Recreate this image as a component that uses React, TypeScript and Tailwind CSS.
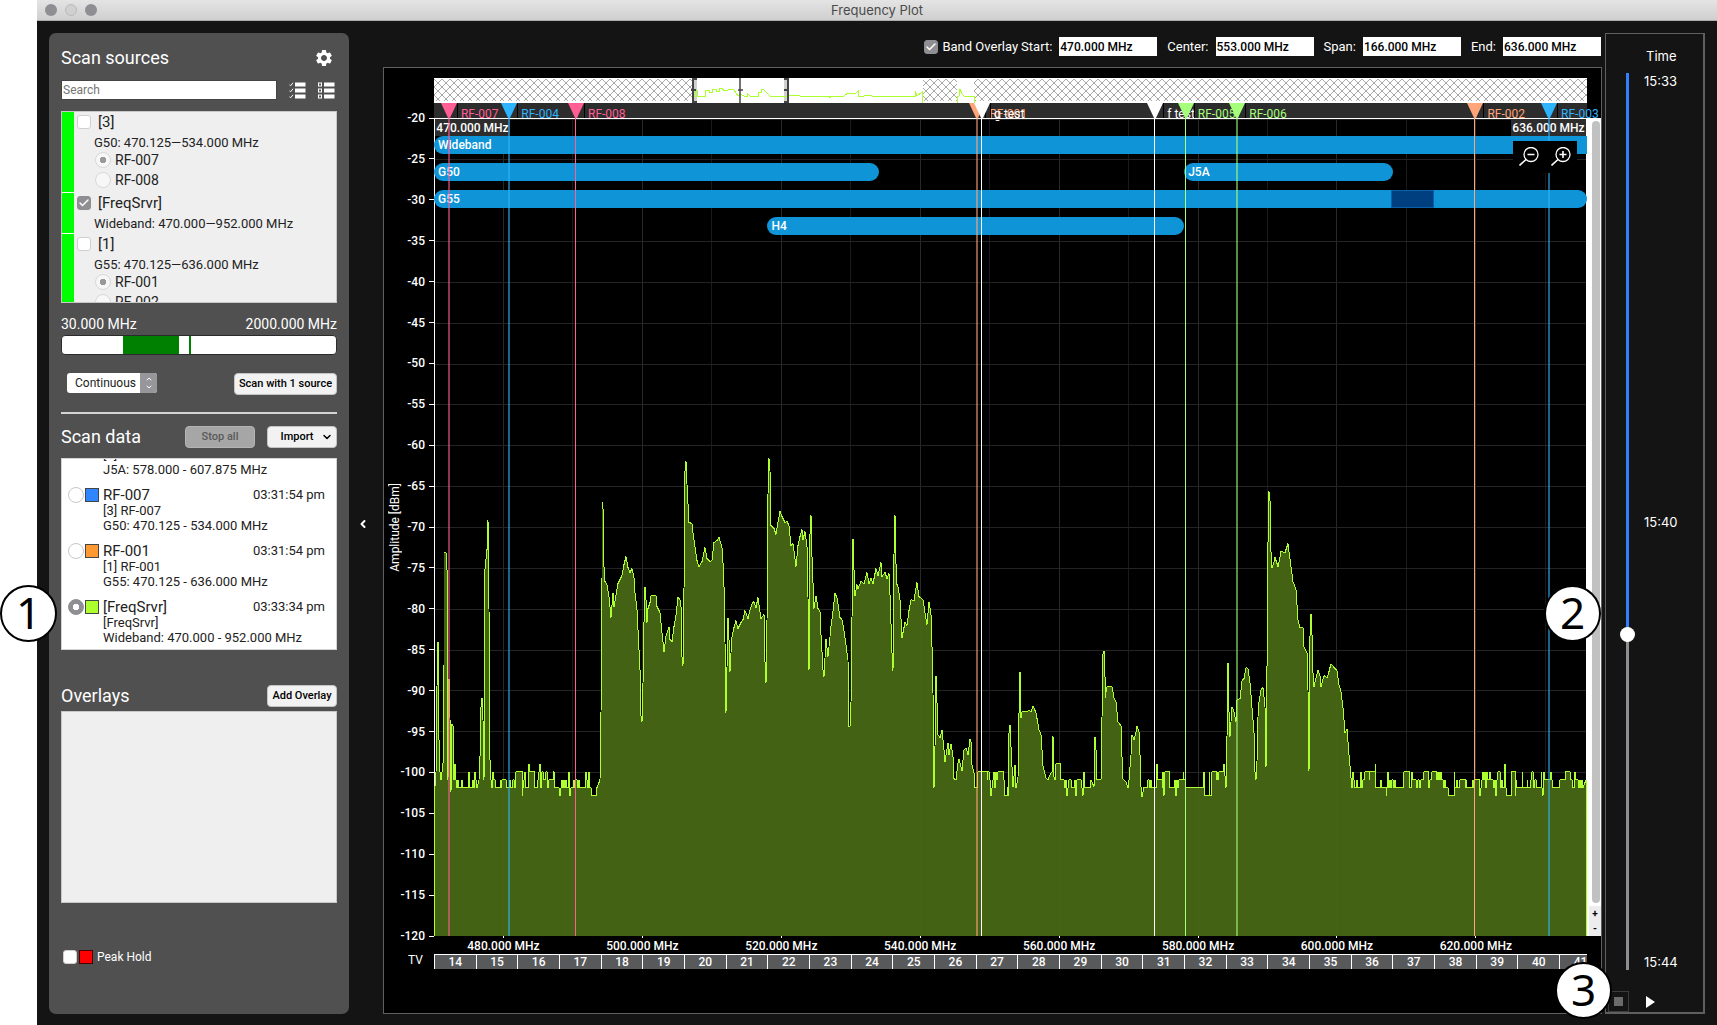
import { useState } from "react";
import type { ReactNode } from "react";
import { Check, ChevronDown, ChevronLeft, ChevronUp } from "lucide-react";
import { MdSettings } from "react-icons/md";

const START = 470;
const SPAN = 166;

const pct = (mhz: number) => `${((mhz - START) / SPAN) * 100}%`;

const SOURCES = [
  { name: "[3]", band: "G50: 470.125—534.000 MHz", radios: ["RF-007", "RF-008"], on: false },
  { name: "[FreqSrvr]", band: "Wideband: 470.000—952.000 MHz", radios: [], on: true },
  { name: "[1]", band: "G55: 470.125—636.000 MHz", radios: ["RF-001", "RF-002"], on: false },
];

const SCANS = [
  { name: "RF-005", source: "[2] RF-005", band: "J5A: 578.000 - 607.875 MHz", time: "03:31:54 pm", swatch: "bg-[#ff5c93]" },
  { name: "RF-007", source: "[3] RF-007", band: "G50: 470.125 - 534.000 MHz", time: "03:31:54 pm", swatch: "bg-[#2f86ff]" },
  { name: "RF-001", source: "[1] RF-001", band: "G55: 470.125 - 636.000 MHz", time: "03:31:54 pm", swatch: "bg-[#ff9a33]" },
  { name: "[FreqSrvr]", source: "[FreqSrvr]", band: "Wideband: 470.000 - 952.000 MHz", time: "03:33:34 pm", swatch: "bg-[#adff2f]" },
];

const RANGES = [
  { label: "Start:", value: "470.000 MHz" },
  { label: "Center:", value: "553.000 MHz" },
  { label: "Span:", value: "166.000 MHz" },
  { label: "End:", value: "636.000 MHz" },
];

const BANDS = [
  { label: "Wideband", from: 470, to: 636, style: "top-[18px] rounded-l-full" },
  { label: "G50", from: 470, to: 534, style: "top-[45px] rounded-full" },
  { label: "J5A", from: 578, to: 608, style: "top-[45px] rounded-full" },
  { label: "G55", from: 470, to: 636, style: "top-[72px] rounded-full" },
  { label: "H4", from: 518, to: 578, style: "top-[99px] rounded-full" },
];

const PINK = { fill: "fill-[#ff5f95]", text: "text-[#ff5f95]", line: "bg-[#ff5f95]" };
const BLUE = { fill: "fill-[#2fb4ff]", text: "text-[#2fb4ff]", line: "bg-[#2fb4ff]" };
const ORANGE = { fill: "fill-[#ffa57a]", text: "text-[#ffa57a]", line: "bg-[#ffa57a]" };
const GREEN = { fill: "fill-[#a5ff7a]", text: "text-[#a5ff7a]", line: "bg-[#a5ff7a]" };
const WHITE = { fill: "fill-white", text: "text-white", line: "bg-white" };

const MARKERS = [
  { label: "RF-007", mhz: 472, color: PINK, wide: true },
  { label: "RF-004", mhz: 480.7, color: BLUE, wide: true },
  { label: "RF-008", mhz: 490.3, color: PINK, wide: false },
  { label: "RF-001", mhz: 548.1, color: ORANGE, wide: true },
  { label: "g test", mhz: 548.8, color: WHITE, wide: false },
  { label: "f test", mhz: 573.7, color: WHITE, wide: false },
  { label: "RF-005", mhz: 578.1, color: GREEN, wide: false },
  { label: "RF-006", mhz: 585.5, color: GREEN, wide: true },
  { label: "RF-002", mhz: 619.8, color: ORANGE, wide: false },
  { label: "RF-003", mhz: 630.4, color: BLUE, wide: true },
];

const LEVELS = Array.from({ length: 21 }, (_, i) => -20 - i * 5);
const FREQ_TICKS = [480, 500, 520, 540, 560, 580, 600, 620];
const FREQ_GRID = Array.from({ length: 16 }, (_, i) => 480 + i * 10);
const CHANNELS = Array.from({ length: 28 }, (_, i) => 14 + i);

// Repeatable noise floor between -99 and -103 dBm
let seed = 7;
function rand() {
  seed = (seed * 16807) % 2147483647;
  return seed / 2147483647;
}

function noise(from: number, to: number) {
  const out: string[] = [];
  let x = from;
  while (x < to) {
    const r = rand();
    const y = r < 0.02 ? 645 : r < 0.22 ? 653 : r < 0.62 ? 661 : r < 0.94 ? 669 : 677;
    out.push(`${x},${y}`);
    x += 1;
    if (rand() < 0.12) {
      x += 3;
      out.push(`${x},${y}`);
    }
  }
  return out.join(" ");
}

const TRACE = [
  "0,668 1,668 2,654 3,568 4,523 4,544 5,621 6,653 7,661 9,646 10,546 10,434 12,434 13,451 13,466 14,661 15,560 16,599 17,673 18,605 19,607 20,661",
  noise(21, 44),
  "45,661 46,638 47,588 48,579 49,601 50,661 51,451 53,431 53,402 54,402 55,490 56,641 57,661",
  noise(58, 164),
  "166,661 167,594 168,459 168,384 169,390 170,448 171,463 173,466 175,478 177,499 179,474 180,488 183,471 184,465 188,457 190,446 192,438 194,449 196,454 198,450 200,459 201,474 203,491 204,511 206,551 207,597 208,603 209,564 210,504 211,468 212,481 213,504 214,490 216,484 217,477 222,477 223,488 226,494 228,514 230,533 232,517 235,508 236,521 238,523 240,508 242,497 244,479 246,481 247,488 248,538 249,547 250,471 251,353 252,343 253,366 255,404 258,405 259,414 261,428 263,442 265,448 268,443 271,429 273,440 276,443 278,442 280,424 283,422 285,419",
  "288,429 289,444 290,468 291,523 292,594 293,549 294,499 295,521 296,553 297,534 298,518 300,509 302,502 304,510 307,504 309,501 311,492 314,500 316,491 318,485 320,483 322,489 324,479 327,500 330,496 331,543 332,564 333,503 334,376 335,340 336,353 337,407 340,410 342,416 344,404 346,393 348,398 351,404 353,403 355,407 357,427 359,425 362,448 364,427 366,418 368,411 369,421 371,413 373,428 374,478 375,551 376,416 377,397 378,438 380,490 382,477 384,490 386,493 387,516 389,551 390,558 392,520 394,538 397,508 399,493 401,475 403,479 406,499 408,501 410,512 413,534 414,541 415,608 416,608 417,584 418,499 419,420 420,451 421,477 423,466 424,470 427,463 430,465 433,454 435,465 437,460 439,465 442,450 444,457 447,444 448,458 451,454 453,460 455,455 456,476 458,534 459,552 460,436 461,397 462,445 463,466 464,468 466,481 468,519 471,504 473,507 475,492 477,481 480,482 483,464 485,478 489,481 491,494 493,506 495,483 497,496 498,528 499,574 500,669 501,628 502,557 503,584 504,616 506,619 508,611 510,631 511,643 514,624 515,636 517,625 519,638 520,660 522,661 524,644 525,640 528,652 530,631 532,629 534,636 536,620 537,623 538,646 540,654 541,669 543,669",
  noise(544, 572),
  "573,668 574,677 575,614 576,606 577,628 579,668 581,646 582,669 584,659 585,595 586,553 586,564 587,599 588,593 593,593 595,591 597,593 599,587 602,594 605,611 607,616 608,631 609,647 612,659 614,661 616,656 618,653 618,618 619,618 620,658",
  noise(621, 658),
  "660,668 661,618 662,631 663,661 667,661 668,598 669,535 670,532 671,558 671,579 673,568 678,568 680,579 682,583 684,603 687,607 688,638 689,660 692,663 694,669 695,661 697,636 698,616 700,621 702,613 703,607 705,613 706,636 707,668 708,678 710,668",
  noise(711, 788),
  "790,645 792,669 793,618 794,544 795,593 796,618 798,588 800,593 802,603 803,581 806,580 808,562 810,560 812,549 814,550 816,564 818,589 820,614 821,653 822,661 823,643 824,598 825,583 827,571 829,569 831,588 832,648 833,548 834,424 835,373 836,382 837,433 838,449 840,444 841,439 844,448 845,444 847,433 851,434 854,425 855,433 857,448 859,463 862,471 864,501 866,509 869,509 870,528 873,534 874,571 875,652 876,518 877,495 878,516 879,554 880,568 882,559 884,551 886,557 887,568 890,557 893,559 895,553 897,545 901,550 903,552 905,566 907,573 909,589 911,614 913,610 915,636 917,659 918,669",
  noise(919, 1150),
  "1152,661",
].join(" ");

function Tick({ label, checked = false }: { label: string; checked?: boolean }) {
  const [on, setOn] = useState(checked);
  return (
    <span className="grid w-3.5 h-3.5 shrink-0">
      <input
        type="checkbox"
        aria-label={label}
        checked={on}
        onChange={() => setOn(!on)}
        className="col-start-1 row-start-1 appearance-none w-3.5 h-3.5 rounded-[3px] border border-[#cfcfcf] bg-white checked:bg-[#8e8e93] checked:border-[#8e8e93]"
      />
      {on && <Check className="col-start-1 row-start-1 m-px w-3 h-3 text-white pointer-events-none" strokeWidth={3} />}
    </span>
  );
}

function PanelButton({ children, disabled = false, className = "" }: { children: ReactNode; disabled?: boolean; className?: string }) {
  return (
    <button
      disabled={disabled}
      className={`h-[22px] rounded border text-[11px] font-medium whitespace-nowrap flex items-center justify-center ${
        disabled ? "bg-[#a6a6a6] border-[#b4b4b4] text-[#5a5a5a]" : "bg-[#f2f2f2] border-[#c4c4c4] text-black"
      } ${className}`}
    >
      {children}
    </button>
  );
}

function ListIcon({ checked }: { checked: boolean }) {
  return (
    <svg viewBox="0 0 17 17" className="w-[17px] h-[17px]">
      {[0, 6, 12].map((y) => (
        <g key={y}>
          <rect x="6" y={y + 0.5} width="10.5" height="4" fill="white" />
          {checked ? (
            <path d={`M0.4 ${y + 2.6} L1.6 ${y + 3.8} L4 ${y + 0.8}`} stroke="white" fill="none" />
          ) : (
            <rect x="0.5" y={y + 1} width="3" height="3" stroke="white" fill="none" />
          )}
        </g>
      ))}
    </svg>
  );
}

function Sidebar() {
  const [selected, setSelected] = useState("[FreqSrvr]");
  return (
    <aside className="w-[300px] shrink-0 rounded-[7px] bg-[#505050] px-3 pt-3 text-white">
      <div className="flex items-center justify-between h-[26px] pr-[3px]">
        <h2 className="text-lg">Scan sources</h2>
        <button aria-label="Settings">
          <MdSettings className="w-5 h-5" />
        </button>
      </div>

      <div className="flex items-center mt-[9px] h-5">
        <input
          aria-label="Search"
          placeholder="Search"
          className="w-[216px] h-5 bg-white border border-[#444] px-px text-xs text-black placeholder:text-[#757575] mr-3"
        />
        <button aria-label="Check all" className="mr-3">
          <ListIcon checked />
        </button>
        <button aria-label="Uncheck all">
          <ListIcon checked={false} />
        </button>
      </div>

      {/* Sources */}
      <div className="mt-[11px] h-48 overflow-hidden bg-[#efefef] border border-[#c8c8c8] text-[#222]">
        {SOURCES.map((s) => (
          <div key={s.name} className="flex">
            <div className="w-3 bg-[#00ff00] border-b border-white" />
            <div className="pl-[3px] pb-[3px]">
              <div className="flex items-center gap-[7px] h-5 text-[15px]">
                <Tick label={s.name} checked={s.on} />
                {s.name}
              </div>
              <div className="h-[18px] leading-[22px] pl-[17px] text-[13px]">{s.band}</div>
              {s.radios.map((r, i) => (
                <label key={r} className="flex items-center gap-1 h-5 pl-[18px] text-sm">
                  <input
                    type="radio"
                    name={s.name}
                    defaultChecked={i === 0}
                    className="appearance-none w-4 h-4 rounded-full border border-[#d8d8d8] bg-[#f7f7f7] checked:bg-[radial-gradient(circle,#999_0_3px,#f7f7f7_3px)]"
                  />
                  {r}
                </label>
              ))}
            </div>
          </div>
        ))}
      </div>

      <div className="flex justify-between mt-3 h-4 leading-[18px] text-sm">
        <span>30.000 MHz</span>
        <span>2000.000 MHz</span>
      </div>
      <div className="flex mt-1 h-5 rounded-sm border border-[#2b2b2b] bg-white">
        <div className="w-14 ml-[61px] bg-[#008000]" />
        <div className="w-0.5 ml-2.5 bg-[#008000]" />
      </div>

      <div className="flex justify-between mt-[18px] pl-1.5">
        <div className="grid w-[90px] h-5">
          <select aria-label="Scan mode" className="col-start-1 row-start-1 appearance-none rounded-[3px] bg-white text-[#222] text-xs leading-4 pl-2">
            <option>Continuous</option>
            <option>Single</option>
          </select>
          <span className="col-start-1 row-start-1 justify-self-end w-[17px] rounded-r-[3px] bg-[#97979b] flex flex-col items-center justify-center pointer-events-none">
            <ChevronUp className="w-2.5 h-2" strokeWidth={3} />
            <ChevronDown className="w-2.5 h-2" strokeWidth={3} />
          </span>
        </div>
        <PanelButton className="w-[103px]">Scan with 1 source</PanelButton>
      </div>

      <hr className="mt-[17px] border-0 h-0.5 bg-[#d4d4d4]" />

      <div className="flex items-center mt-3 h-[22px]">
        <h2 className="text-lg flex-1">Scan data</h2>
        <PanelButton disabled className="w-[70px] mr-3">Stop all</PanelButton>
        <PanelButton className="w-[70px] gap-2 pl-2.5">
          Import
          <ChevronDown className="w-3 h-3" strokeWidth={3} />
        </PanelButton>
      </div>

      {/* Recorded scans, scrolled to the end */}
      <div className="flex flex-col justify-end mt-2.5 h-48 overflow-hidden bg-white border border-[#d4d4d4] text-[#222]">
        {SCANS.map((s) => (
          <label key={s.source} className="flex shrink-0 h-14 pt-1.5 pl-1.5 pr-[11px]">
            <input
              type="radio"
              name="scan"
              checked={selected === s.name}
              onChange={() => setSelected(s.name)}
              className="appearance-none w-4 h-4 rounded-full border border-[#c8c8c8] bg-white checked:border-[#8e8e93] checked:bg-[radial-gradient(circle,#fff_0_3px,#8e8e93_3px)]"
            />
            <span className={`w-3.5 h-3.5 mt-px ml-px mr-1 border border-[#444] ${s.swatch}`} />
            <span className="flex-1 text-[13px]">
              <span className="flex justify-between text-[15px] leading-4">
                {s.name}
                <span className="text-[13px] leading-4">{s.time}</span>
              </span>
              <span className="block leading-[15px]">{s.source}</span>
              <span className="block leading-[15px]">{s.band}</span>
            </span>
          </label>
        ))}
      </div>

      <div className="flex items-center justify-between mt-[35px] h-[22px]">
        <h2 className="text-lg">Overlays</h2>
        <PanelButton className="w-[70px]">Add Overlay</PanelButton>
      </div>
      <div className="mt-1 h-48 bg-[#efefef] border border-[#c8c8c8]" />

      <div className="flex items-center mt-[44px] h-5 pl-0.5 text-xs leading-5">
        <Tick label="Peak Hold" />
        <span className="w-3.5 h-3.5 ml-0.5 mr-1 bg-[#ff0000] border border-[#4a0000]" />
        Peak Hold
      </div>
    </aside>
  );
}

function Toolbar() {
  return (
    <div className="flex justify-end gap-2.5 h-[34px] pt-1 pr-px text-[13px] text-white">
      <span className="flex items-center gap-1 h-[19px] -mr-[7px]">
        <Tick label="Band Overlay" checked />
        Band Overlay
      </span>
      {RANGES.map((r) => (
        <label key={r.label} className="flex items-center gap-[7px] h-[19px]">
          {r.label}
          <input defaultValue={r.value} className="w-[98px] h-[19px] bg-white px-px text-xs font-medium text-black" />
        </label>
      ))}
    </div>
  );
}

function Overview() {
  return (
    <svg viewBox="0 0 1153 25" preserveAspectRatio="none" className="flex-1 h-[25px] bg-white">
      <defs>
        <pattern id="hatch" width="8" height="8" patternUnits="userSpaceOnUse" patternTransform="translate(0 1)">
          <path d="M0 0 L8 8 M8 0 L0 8" stroke="#a8a8a8" shapeRendering="crispEdges" />
        </pattern>
      </defs>
      <rect x="0" y="1" width="258" height="22" fill="url(#hatch)" />
      <rect x="489" y="1" width="34" height="22" fill="url(#hatch)" />
      <rect x="540" y="1" width="613" height="22" fill="url(#hatch)" />
      <rect x="259" y="0" width="4" height="25" fill="#d0d0d0" />
      <rect x="350" y="0" width="4" height="25" fill="#d0d0d0" />
      <g fill="none" stroke="#adff2f" shapeRendering="crispEdges">
        <path d="M259 25V18H261V12H263V18H271V12H275V14H278V11H282V13H285V10H288V10L290 13L294 12L297 11L300 12L304 18L306 16L310 18H313V15L316 18H324V14H327V11H329L336 18H355L360 17L366 18H395V19H396V18H410L414 15H422L424 13V18H430L434 17L438 18H481V13L483 18L487 15L488 14V25" />
        <path d="M523 25V18H525L526 11L528 16L530 18H540V25" />
      </g>
      <g fill="none" stroke="#444" strokeWidth="2">
        <path d="M263 1H259V24H263M257 12H262" />
        <path d="M350 1H354V24H350M350 12H354" />
        <path d="M306 0V25M304 12H309" strokeWidth="1.5" />
      </g>
    </svg>
  );
}

function MarkerStrip() {
  return (
    <div className="relative flex-1 h-[15px] bg-[#2d2d2d]">
      {MARKERS.map((m) => (
        <div key={m.label} className="absolute top-0 flex -ml-[7px]" style={{ left: pct(m.mhz) }}>
          <svg viewBox="0 0 16 16" className="w-4 h-4">
            <path d="M0 0H16L8.5 16H7.5Z" className={m.color.fill} />
          </svg>
          <span className={`h-[15px] border-l border-black pl-[3px] text-xs leading-[22px] whitespace-nowrap ${m.color.text}`}>{m.label}</span>
        </div>
      ))}
    </div>
  );
}

function Plot() {
  return (
    <div className="relative flex-1">
      <svg viewBox="0 0 1153 817" preserveAspectRatio="none" className="absolute inset-0 w-full h-full" shapeRendering="crispEdges">
        {FREQ_GRID.map((f) => (
          <line key={f} x1={((f - START) / SPAN) * 1153} x2={((f - START) / SPAN) * 1153} y1="0" y2="817" stroke={f % 20 ? "#1a1a1a" : "#292929"} />
        ))}
        {LEVELS.map((l) => (
          <line key={l} x1="0" x2="1153" y1={(-20 - l) * 8.16 + 1} y2={(-20 - l) * 8.16 + 1} stroke="#242424" />
        ))}
        <polygon points={`0,817 ${TRACE} 1152,817`} fill="#486714" fillOpacity="0.95" />
      </svg>
      <div className="absolute inset-0 border border-b-0 border-white" />
      <svg viewBox="0 0 1153 817" preserveAspectRatio="none" className="absolute inset-0 w-full h-full" shapeRendering="crispEdges">
        <polyline points={`0.5,817 ${TRACE} 1152.5,817`} fill="none" stroke="#adff2f" />
      </svg>

      <span className="absolute left-px top-px h-[17px] leading-[19px] w-[75px] text-center whitespace-nowrap bg-[#2d2d2d] text-xs font-medium">470.000 MHz</span>
      <span className="absolute right-px top-px h-[17px] leading-[19px] w-[75px] text-center whitespace-nowrap bg-[#2d2d2d] text-xs font-medium">636.000 MHz</span>

      {BANDS.map((b) => (
        <div
          key={b.label}
          className={`absolute h-[18px] leading-[18px] pl-1 text-xs font-medium bg-[#1094d8] ${b.style}`}
          style={{ left: pct(b.from), width: `${((b.to - b.from) / SPAN) * 100}%` }}
        >
          {b.label}
        </div>
      ))}
      <div className="absolute top-[72px] h-[18px] bg-[#003f7f] border border-[#0561a8]" style={{ left: pct(607.8), width: `${(6.2 / SPAN) * 100}%` }} />

      {MARKERS.map((m) => (
        <div key={m.label} className={`absolute inset-y-0 ${m.wide ? "w-0.5 opacity-55" : "w-px"} ${m.color.line}`} style={{ left: pct(m.mhz) }} />
      ))}

      <div className="absolute top-[23px] right-2.5 w-16 h-8 flex items-center justify-around bg-black">
        <button aria-label="Zoom out">
          <svg viewBox="0 0 20 20" className="w-5 h-5 fill-none stroke-white">
            <circle cx="12" cy="7.5" r="7" strokeWidth="1.3" />
            <path d="M7 12.5L0.5 18.5M8.5 7.5H15.5" strokeWidth="1.6" />
          </svg>
        </button>
        <button aria-label="Zoom in">
          <svg viewBox="0 0 20 20" className="w-5 h-5 fill-none stroke-white">
            <circle cx="12" cy="7.5" r="7" strokeWidth="1.3" />
            <path d="M7 12.5L0.5 18.5M8.5 7.5H15.5M12 4V11" strokeWidth="1.6" />
          </svg>
        </button>
      </div>
    </div>
  );
}

function Chart() {
  return (
    <div className="flex-1 flex flex-col pt-2.5 pb-11 bg-black border border-[#5f5f5f] text-white">
      <div className="flex pl-[50px] pr-3.5">
        <Overview />
      </div>
      <div className="flex pl-[50px] pr-3.5">
        <MarkerStrip />
      </div>

      <div className="flex flex-1">
        {/* Amplitude axis */}
        <div className="relative w-[50px] flex items-center">
          <span className="[writing-mode:vertical-rl] rotate-180 ml-[3px] text-xs leading-4">Amplitude [dBm]</span>
          <div className="absolute inset-y-0 right-0 w-10">
            {LEVELS.map((l) => (
              <div key={l} className="absolute right-0 flex items-center gap-1 h-4 -mt-2 text-xs font-medium" style={{ top: `${-20 - l}%` }}>
                {l}
                <span className="w-[5px] h-px bg-white" />
              </div>
            ))}
          </div>
        </div>

        <Plot />

        <div className="w-3.5 flex flex-col items-end bg-white text-black">
          <div className="flex-1 w-2 mr-px mt-[3px] mb-[3px] rounded-full bg-[#c1c1c1]" />
          <button aria-label="Expand scale" className="w-3 h-[15px] bg-[#ededed] text-[10px] leading-[15px] font-bold">+</button>
          <button aria-label="Shrink scale" className="w-3 h-[15px] bg-[#ededed] text-[10px] leading-[15px] font-bold">-</button>
        </div>
      </div>

      <div className="pl-[50px] pr-3.5">
        <div className="relative h-[18px]">
          {FREQ_TICKS.map((f) => (
            <div key={f} className="absolute top-0 w-20 -ml-10 flex flex-col items-center text-xs leading-4 font-medium" style={{ left: pct(f) }}>
              <span className="w-px h-0.5 bg-white" />
              {f}.000 MHz
            </div>
          ))}
        </div>
      </div>

      <div className="flex pr-3.5">
        <span className="w-[50px] pl-6 text-xs leading-[13px]">TV</span>
        <div className="flex-1 min-w-0 flex overflow-hidden h-[15px] border-t border-white bg-[#58595b]">
          {CHANNELS.map((c) => (
            <span key={c} className="shrink-0 border-l border-white text-center text-xs leading-[14px] font-medium" style={{ width: `${(6 / SPAN) * 100}%` }}>
              {c}
            </span>
          ))}
        </div>
      </div>
    </div>
  );
}

function TimePanel() {
  return (
    <div className="w-[100px] shrink-0 ml-[3px] flex flex-col border-l border-t border-r-2 border-b-2 border-[#5f5f5f] text-white font-['Inter',sans-serif] text-[13px]">
      <h3 className="h-[39px] pt-3 pl-10 leading-5">Time</h3>
      <div className="flex flex-1 pl-3.5">
        <input
          type="range"
          aria-label="Time"
          max={1000}
          defaultValue={628}
          className="appearance-none [writing-mode:vertical-lr] w-[15px] bg-transparent [&::-webkit-slider-runnable-track]:w-[3px] [&::-webkit-slider-runnable-track]:bg-[linear-gradient(to_bottom,#2f7fff_63%,#8e8e93_63%)] [&::-webkit-slider-thumb]:appearance-none [&::-webkit-slider-thumb]:w-[15px] [&::-webkit-slider-thumb]:h-[15px] [&::-webkit-slider-thumb]:-ml-1.5 [&::-webkit-slider-thumb]:rounded-full [&::-webkit-slider-thumb]:bg-white"
        />
        <div className="flex flex-col justify-between pl-[9px] leading-4">
          <span>15:33</span>
          <span>15:40</span>
          <span>15:44</span>
        </div>
      </div>
      <div className="flex items-end h-[42px] pl-0.5">
        <button aria-label="Stop" className="w-[21px] h-[21px] flex items-center justify-center border border-[#3c3c3c]">
          <span className="w-[9px] h-[9px] bg-[#6b6b6b]" />
        </button>
        <button aria-label="Play" className="ml-[17px] h-[21px]">
          <svg viewBox="0 0 9 12" className="w-[9px] h-3 fill-white">
            <path d="M0 0L9 6L0 12Z" />
          </svg>
        </button>
      </div>
    </div>
  );
}

function Callout({ n, className }: { n: number; className: string }) {
  return (
    <div className={`absolute w-[57px] h-[57px] rounded-full border-2 border-black bg-white text-black flex items-center justify-center font-['Noto_Sans',sans-serif] text-[44px] leading-none pb-1 ${className}`}>
      {n}
    </div>
  );
}

export default function App() {
  return (
    <div className="relative min-h-screen flex bg-white pl-[37px] font-['Roboto',sans-serif]">
      <div className="flex-1 min-w-0 flex flex-col bg-[#141414]">
        <header className="relative h-[21px] flex items-center justify-center bg-linear-to-b from-[#e4e4e4] to-[#cfcfcf] border-b border-[#adadad]">
          <div className="absolute left-2 top-1 flex gap-2">
            <span className="w-3 h-3 rounded-full bg-[#8e8e93]" />
            <span className="w-3 h-3 rounded-full bg-[#d0d0d0] border border-[#bababa]" />
            <span className="w-3 h-3 rounded-full bg-[#8e8e93]" />
          </div>
          <h1 className="pt-px font-['Inter',sans-serif] text-[13px] text-[#4a4a4a]">Frequency Plot</h1>
        </header>

        <div className="flex flex-1 p-3 pb-[11px]">
          <Sidebar />
          <button aria-label="Collapse panel" className="w-[34px] shrink-0 flex items-center justify-center pr-1.5 text-white">
            <ChevronLeft className="w-3 h-3" strokeWidth={4} />
          </button>
          <main className="flex-1 min-w-0 flex flex-col">
            <Toolbar />
            <Chart />
          </main>
          <TimePanel />
        </div>
      </div>

      <Callout n={1} className="left-0 top-[585px]" />
      <Callout n={2} className="right-[116px] top-[585px]" />
      <Callout n={3} className="right-[105px] bottom-[6px]" />
    </div>
  );
}
